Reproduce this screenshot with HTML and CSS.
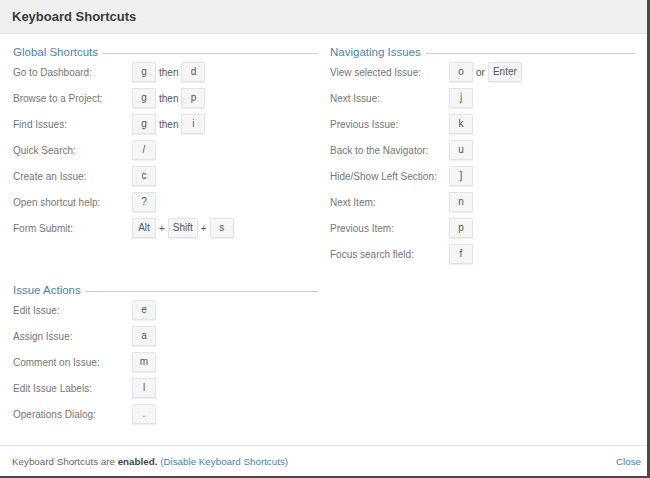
FILE: index.html
```html
<!DOCTYPE html>
<html lang="en">
<head>
<meta charset="utf-8">
<title>Keyboard Shortcuts</title>
<link rel="stylesheet" href="styles.css">
</head>
<body>
<div class="dialog">
  <div class="dialog-header">Keyboard Shortcuts</div>
  <div class="dialog-content">
    <section class="group group-global">
      <h3 class="group-title"><span>Global Shortcuts</span></h3>
      <div class="rows">
        <div class="row"><span class="label">Go to Dashboard:</span><span class="keys"><kbd class="key">g</kbd><span class="sep">then</span><kbd class="key">d</kbd></span></div>
        <div class="row"><span class="label">Browse to a Project:</span><span class="keys"><kbd class="key">g</kbd><span class="sep">then</span><kbd class="key">p</kbd></span></div>
        <div class="row"><span class="label">Find Issues:</span><span class="keys"><kbd class="key">g</kbd><span class="sep">then</span><kbd class="key">i</kbd></span></div>
        <div class="row"><span class="label">Quick Search:</span><span class="keys"><kbd class="key">/</kbd></span></div>
        <div class="row"><span class="label">Create an Issue:</span><span class="keys"><kbd class="key">c</kbd></span></div>
        <div class="row"><span class="label">Open shortcut help:</span><span class="keys"><kbd class="key">?</kbd></span></div>
        <div class="row"><span class="label">Form Submit:</span><span class="keys"><kbd class="key">Alt</kbd><span class="sep">+</span><kbd class="key">Shift</kbd><span class="sep">+</span><kbd class="key">s</kbd></span></div>
      </div>
    </section>
    <section class="group group-nav">
      <h3 class="group-title"><span>Navigating Issues</span></h3>
      <div class="rows">
        <div class="row"><span class="label">View selected Issue:</span><span class="keys"><kbd class="key">o</kbd><span class="sep">or</span><kbd class="key">Enter</kbd></span></div>
        <div class="row"><span class="label">Next Issue:</span><span class="keys"><kbd class="key">j</kbd></span></div>
        <div class="row"><span class="label">Previous Issue:</span><span class="keys"><kbd class="key">k</kbd></span></div>
        <div class="row"><span class="label">Back to the Navigator:</span><span class="keys"><kbd class="key">u</kbd></span></div>
        <div class="row"><span class="label">Hide/Show Left Section:</span><span class="keys"><kbd class="key">]</kbd></span></div>
        <div class="row"><span class="label">Next Item:</span><span class="keys"><kbd class="key">n</kbd></span></div>
        <div class="row"><span class="label">Previous Item:</span><span class="keys"><kbd class="key">p</kbd></span></div>
        <div class="row"><span class="label">Focus search field:</span><span class="keys"><kbd class="key">f</kbd></span></div>
      </div>
    </section>
    <section class="group group-actions">
      <h3 class="group-title"><span>Issue Actions</span></h3>
      <div class="rows">
        <div class="row"><span class="label">Edit Issue:</span><span class="keys"><kbd class="key">e</kbd></span></div>
        <div class="row"><span class="label">Assign Issue:</span><span class="keys"><kbd class="key">a</kbd></span></div>
        <div class="row"><span class="label">Comment on Issue:</span><span class="keys"><kbd class="key">m</kbd></span></div>
        <div class="row"><span class="label">Edit Issue Labels:</span><span class="keys"><kbd class="key">l</kbd></span></div>
        <div class="row"><span class="label">Operations Dialog:</span><span class="keys"><kbd class="key">.</kbd></span></div>
      </div>
    </section>
  </div>
  <div class="dialog-footer">
    <span class="status">Keyboard Shortcuts are <strong>enabled.</strong> <a href="#" class="link">(Disable Keyboard Shortcuts)</a></span>
    <a href="#" class="link">Close</a>
  </div>
</div>
</body>
</html>
```
FILE: styles.css
```css
html, body {
  margin: 0;
  padding: 0;
}
body {
  background: #4a4a4a;
  font-family: "Liberation Sans", Arial, sans-serif;
  width: 650px;
  height: 478px;
  overflow: hidden;
}
.dialog {
  width: 647px;
  height: 476px;
  background: #ffffff;
  display: flex;
  flex-direction: column;
}
.dialog-header {
  height: 33px;
  border-bottom: 1px solid #e2e2e2;
  background: #f0f0f0;
  color: #3a3a3a;
  font-size: 13px;
  font-weight: bold;
  line-height: 33px;
  padding-left: 12px;
}
.dialog-content {
  flex: 1;
  display: grid;
  grid-template-columns: 305px 305px;
  grid-template-rows: auto 1fr;
  column-gap: 12px;
  row-gap: 19px;
  padding: 11px 0 0 13px;
  align-content: start;
}
.group-global { grid-column: 1; grid-row: 1; }
.group-nav { grid-column: 2; grid-row: 1; }
.group-actions { grid-column: 1; grid-row: 2; }
.group-title {
  margin: 0 0 3px 0;
  display: flex;
  align-items: center;
  gap: 4px;
  font-size: 11.5px;
  font-weight: normal;
  line-height: 14px;
  height: 14px;
  color: #4a7fbd;
}
.group-title::after {
  content: "";
  flex: 1;
  height: 1px;
  background: #cfcfcf;
  margin-top: 2px;
}
.rows {
  display: flex;
  flex-direction: column;
  gap: 6px;
}
.row {
  display: flex;
  align-items: center;
  height: 20px;
}
.label {
  width: 119px;
  flex: none;
  font-size: 10px;
  color: #767676;
}
.keys {
  display: flex;
  align-items: center;
  gap: 3px;
  font-size: 10px;
  color: #555555;
}
.key {
  font-family: "Liberation Sans", Arial, sans-serif;
  font-size: 10px;
  color: #555555;
  min-width: 14px;
  height: 18px;
  line-height: 18px;
  padding: 0 4px;
  text-align: center;
  background: #f6f6f6;
  border: 1px solid #e3e3e3;
  border-radius: 1px;
  box-shadow: 0 1px 0 #eeeeee;
}
.sep {
  font-size: 10px;
  color: #555555;
}
.dialog-footer {
  height: 30px;
  border-top: 1px solid #e6e6e6;
  display: flex;
  align-items: center;
  justify-content: space-between;
  padding: 0 6px 0 12px;
  font-size: 9.8px;
  color: #666666;
}
.dialog-footer strong {
  color: #444444;
}
.link {
  color: #4a7fbd;
  text-decoration: none;
}
```
